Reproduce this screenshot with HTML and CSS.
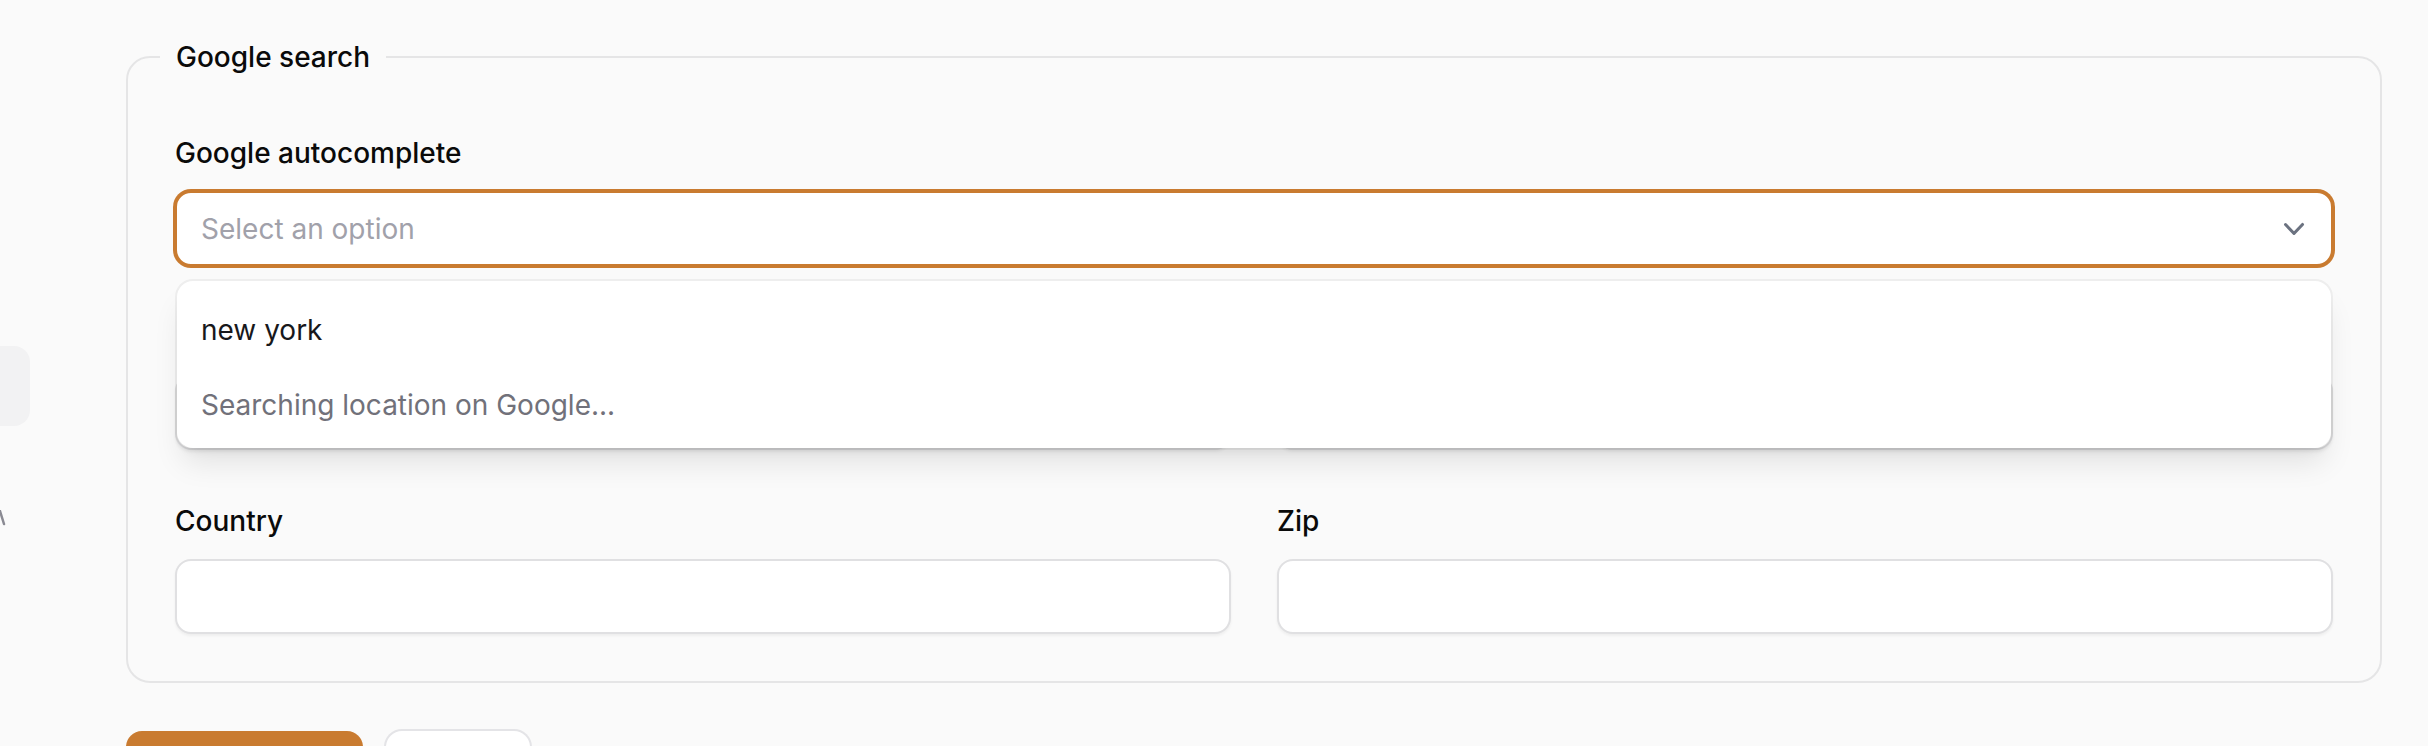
FILE: index.html
```html
<!DOCTYPE html>
<html lang="en">
<head>
<meta charset="utf-8">
<title>Google search</title>
<link rel="stylesheet" href="styles.css">
</head>
<body>
<div class="layout">
  <aside class="sidebar">
    <div class="nav-pill"></div>
    <svg class="nav-chevron" viewBox="0 0 8 20" aria-hidden="true"><path d="M0 1 L4 14" fill="none" stroke="#8a8a93" stroke-width="2.5" stroke-linecap="round"/></svg>
  </aside>
  <main class="main">
    <form class="form">
      <fieldset class="section">
        <legend class="section-title">Google search</legend>
        <div class="grid">
          <div class="field span-2">
            <label class="label">Google autocomplete</label>
            <div class="select-wrap">
              <div class="select">
                <span class="placeholder">Select an option</span>
                <svg class="chev" viewBox="0 0 20 20" fill="currentColor" aria-hidden="true"><path fill-rule="evenodd" d="M5.23 7.21a.75.75 0 011.06.02L10 11.168l3.71-3.938a.75.75 0 111.08 1.04l-4.25 4.5a.75.75 0 01-1.08 0l-4.25-4.5a.75.75 0 01.02-1.06z" clip-rule="evenodd"/></svg>
              </div>
              <div class="dropdown">
                <div class="dd-search">new york</div>
                <div class="dd-msg">Searching location on Google...</div>
              </div>
            </div>
          </div>
          <div class="field">
            <label class="label is-covered">City</label>
            <div class="input"></div>
          </div>
          <div class="field">
            <label class="label is-covered">State</label>
            <div class="input"></div>
          </div>
          <div class="field">
            <label class="label">Country</label>
            <div class="input"></div>
          </div>
          <div class="field">
            <label class="label">Zip</label>
            <div class="input"></div>
          </div>
        </div>
      </fieldset>
      <div class="actions">
        <button type="button" class="btn btn-primary">Save changes</button>
        <button type="button" class="btn btn-secondary">Cancel</button>
      </div>
    </form>
  </main>
</div>
</body>
</html>
```

FILE: styles.css
```css
html, body {
  margin: 0;
  padding: 0;
  height: 746px;
  overflow: hidden;
  background: #fafafa;
  font-family: Inter, "Noto Sans", "Liberation Sans", sans-serif;
  color: #0a0a0a;
}

.layout {
  display: flex;
  min-height: 746px;
}

.sidebar {
  width: 30px;
  flex: none;
  display: flex;
  flex-direction: column;
  padding-top: 346px;
  gap: 84px;
  overflow: hidden;
}

.nav-pill {
  height: 80px;
  background: #f2f2f3;
  border-radius: 0 16px 16px 0;
}

.nav-chevron {
  display: block;
  width: 8px;
  height: 20px;
}

.main {
  flex: 1;
  min-width: 0;
  padding: 37px 46px 0 96px;
}

.form {
  margin: 0;
}

.section {
  margin: 0;
  min-width: 0;
  border: 2px solid #e5e5e6;
  border-radius: 24px;
  padding: 56px 47px 47px;
}

.section-title {
  margin-left: -15px;
  padding: 0 16px;
  font-size: 28px;
  line-height: 40px;
  font-weight: 500;
  color: #0a0a0a;
}

.grid {
  display: grid;
  grid-template-columns: 1fr 1fr;
  column-gap: 46px;
  row-gap: 51px;
}

.span-2 {
  grid-column: span 2;
}

.field {
  display: flex;
  flex-direction: column;
  gap: 18px;
  min-width: 0;
}

.label {
  font-size: 28px;
  line-height: 40px;
  font-weight: 500;
  color: #0a0a0a;
}

.label.is-covered {
  visibility: hidden;
}

.input {
  height: 75px;
  box-sizing: border-box;
  border: 2px solid #e0e0e2;
  border-radius: 16px;
  background: #fff;
  box-shadow: 0 2px 3px rgba(0, 0, 0, 0.05);
}

.select-wrap {
  position: relative;
}

.select {
  height: 75px;
  box-sizing: border-box;
  border: 2px solid #c97b30;
  box-shadow: 0 0 0 2px #c97b30;
  border-radius: 16px;
  background: #fff;
  display: flex;
  align-items: center;
  padding: 0 17px 0 24px;
}

.placeholder {
  flex: 1;
  font-size: 28px;
  line-height: 40px;
  color: #a1a1aa;
}

.chev {
  width: 40px;
  height: 40px;
  color: #6b7280;
  flex: none;
}

.dropdown {
  position: absolute;
  top: 90px;
  left: 2px;
  right: 2px;
  z-index: 10;
  background: #fff;
  border-radius: 16px;
  padding: 8px 0;
  box-shadow: 0 0 0 2px rgba(10, 10, 10, 0.05),
              0 20px 30px -6px rgba(0, 0, 0, 0.1),
              0 8px 12px -8px rgba(0, 0, 0, 0.1);
}

.dd-search {
  padding: 21px 24px 17px;
  font-size: 28px;
  line-height: 40px;
  color: #18181b;
}

.dd-msg {
  padding: 18px 24px 15px;
  font-size: 28px;
  line-height: 40px;
  color: #71717a;
}

.actions {
  display: flex;
  gap: 23px;
  margin-top: 48px;
}

.btn {
  height: 72px;
  border: none;
  border-radius: 16px;
  font-family: inherit;
  font-size: 28px;
  font-weight: 600;
  padding: 0;
}

.btn-primary {
  width: 237px;
  background: #c97b30;
  color: #fff;
}

.btn-secondary {
  width: 144px;
  background: #fff;
  color: #0a0a0a;
  box-shadow: 0 0 0 2px #e4e4e7;
}
```
